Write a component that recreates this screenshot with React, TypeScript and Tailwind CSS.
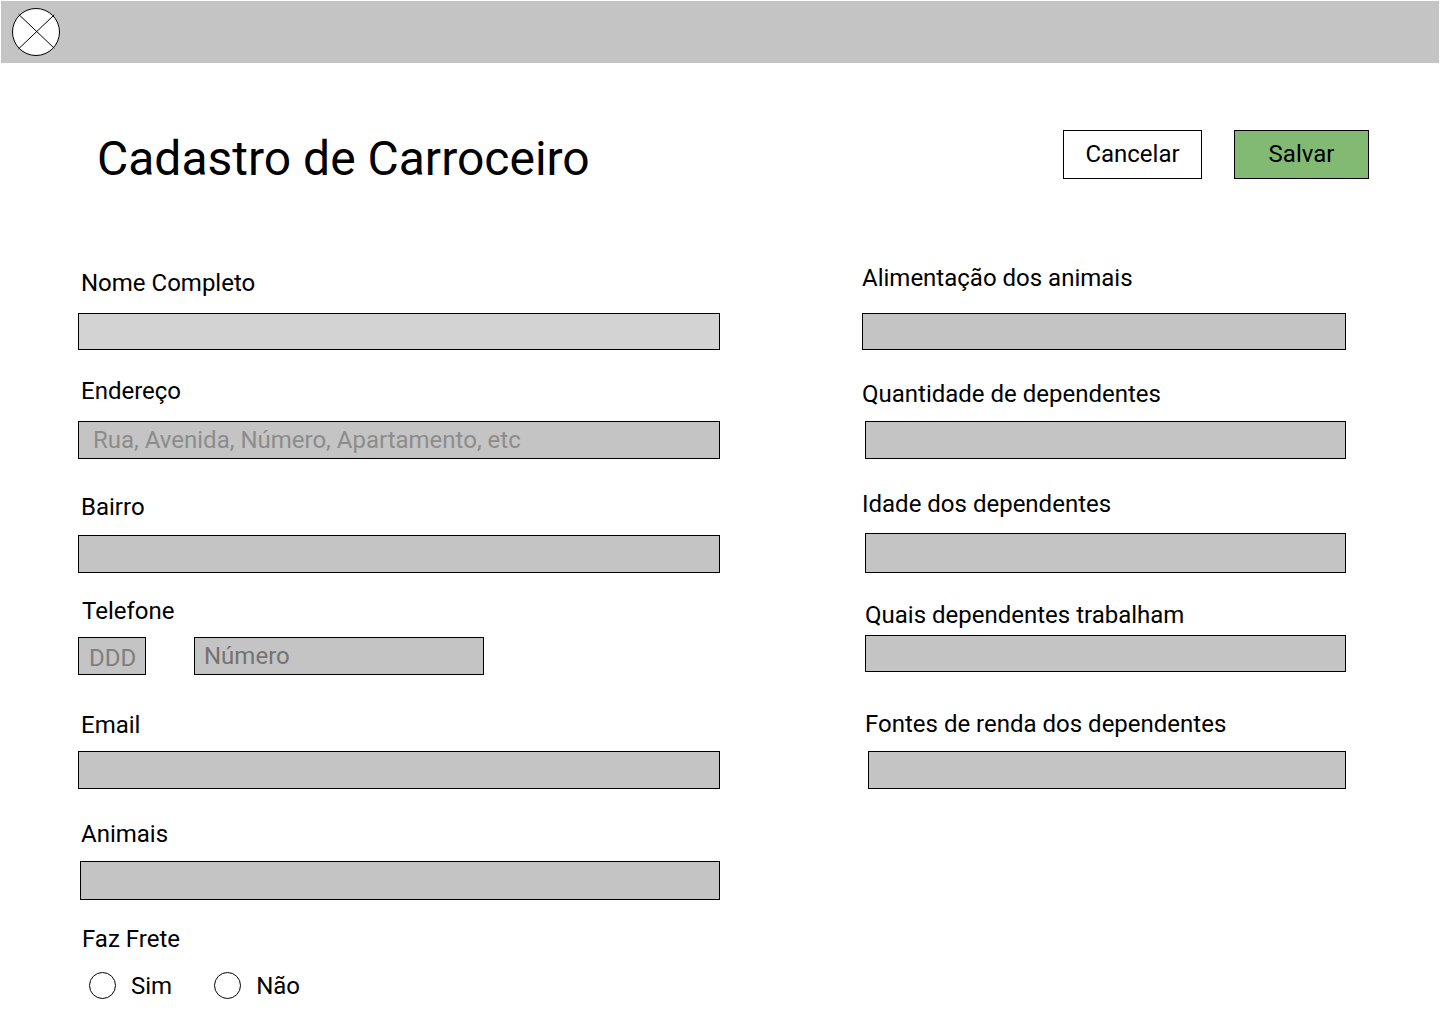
import type { ReactNode } from "react";

type FieldProps = {
  id: string;
  label: string;
  placeholder?: string;
  className: string;
  labelClass?: string;
  inputClass: string;
};

function Field({ id, label, placeholder, className, labelClass = "", inputClass }: FieldProps) {
  return (
    <div className={`flex flex-col ${className}`}>
      <label htmlFor={id} className={`self-start ${labelClass}`}>{label}</label>
      <input
        id={id}
        type="text"
        placeholder={placeholder}
        className={`block w-full border border-black outline-none placeholder:opacity-100 ${inputClass}`}
      />
    </div>
  );
}

function Choice({ value, children }: { value: string; children: ReactNode }) {
  return (
    <label className="flex items-start gap-[15px]">
      <input
        type="radio"
        name="frete"
        value={value}
        className="size-[27px] appearance-none rounded-full border border-black bg-white checked:bg-[#82b973]"
      />
      {children}
    </label>
  );
}

export default function App() {
  return (
    <div className="min-h-screen bg-white pb-6 font-['Roboto',sans-serif] text-2xl leading-7 text-black">
      <header className="mx-px flex h-[63px] items-center border-t border-white bg-[#c4c4c4] pl-[11px]">
        <a href="#" aria-label="Início">
          <svg viewBox="0 0 48 48" className="block size-12" fill="none" stroke="black">
            <circle cx="24" cy="24" r="23.5" fill="white" />
            <path d="M6.5 6.2L42.3 40.3M42.3 6.8L6.5 40.9" />
          </svg>
        </a>
      </header>
      <form onSubmit={(e) => e.preventDefault()}>
        <div className="flex items-start justify-between pt-[67px] pr-[71px] pl-[97px]">
          <h1 className="text-5xl leading-[58px]">Cadastro de Carroceiro</h1>
          <div className="flex gap-8">
            <button type="button" className="h-[49px] w-[139px] border border-black bg-white pb-[2px]">Cancelar</button>
            <button type="submit" className="h-[49px] w-[135px] border border-black bg-[#82b973] pb-[2px]">Salvar</button>
          </div>
        </div>
        <div className="grid grid-cols-[642fr_484fr] gap-[142px] pt-[76px] pr-[94px] pl-[78px]">
          <div className="pt-[5px]">
            <Field id="nome" label="Nome Completo" className="gap-4" labelClass="pl-[3px]" inputClass="h-[37px] bg-[#d3d3d3]" />
            <Field id="endereco" label="Endereço" placeholder="Rua, Avenida, Número, Apartamento, etc" className="mt-[27px] gap-4" labelClass="pl-[3px]" inputClass="h-[38px] bg-[#c4c4c4] px-[14px] placeholder:text-[#8c8c8c]" />
            <Field id="bairro" label="Bairro" className="mt-[34px] gap-[14px]" labelClass="pl-[3px]" inputClass="h-[38px] bg-[#c4c4c4]" />
            <fieldset className="mt-6">
              <legend className="pl-1">Telefone</legend>
              <div className="mt-3 flex gap-12">
                <input aria-label="DDD" placeholder="DDD" className="h-[38px] w-[68px] border border-black bg-[#c4c4c4] pt-[3px] pl-[10px] outline-none placeholder:text-[#7f7f7f]" />
                <input aria-label="Número" placeholder="Número" className="h-[38px] w-[290px] border border-black bg-[#c4c4c4] px-[9px] outline-none placeholder:text-[#737373]" />
              </div>
            </fieldset>
            <Field id="email" label="Email" className="mt-9 gap-3" labelClass="pl-[3px]" inputClass="h-[38px] bg-[#c4c4c4]" />
            <Field id="animais" label="Animais" className="mt-[31px] gap-[13px] pl-[2px]" labelClass="pl-px" inputClass="h-[39px] bg-[#c4c4c4]" />
            <fieldset className="mt-[25px]">
              <legend className="pl-1">Faz Frete</legend>
              <div className="mt-[19px] flex gap-[42px] pl-[11px]">
                <Choice value="sim">Sim</Choice>
                <Choice value="nao">Não</Choice>
              </div>
            </fieldset>
          </div>
          <div>
            <Field id="alimentacao" label="Alimentação dos animais" className="gap-[21px]" inputClass="h-[37px] bg-[#c4c4c4]" />
            <Field id="quantidade" label="Quantidade de dependentes" className="mt-[30px] gap-[13px] pl-[3px]" labelClass="-ml-[3px]" inputClass="h-[38px] bg-[#c4c4c4]" />
            <Field id="idade" label="Idade dos dependentes" className="mt-[31px] gap-[15px] pl-[3px]" labelClass="-ml-[3px]" inputClass="h-[40px] bg-[#c4c4c4]" />
            <Field id="trabalham" label="Quais dependentes trabalham" className="mt-7 gap-[6px] pl-[3px]" inputClass="h-[37px] bg-[#c4c4c4]" />
            <Field id="renda" label="Fontes de renda dos dependentes" className="mt-[38px] gap-[13px] pl-[6px]" labelClass="-ml-[3px]" inputClass="h-[38px] bg-[#c4c4c4]" />
          </div>
        </div>
      </form>
    </div>
  );
}
